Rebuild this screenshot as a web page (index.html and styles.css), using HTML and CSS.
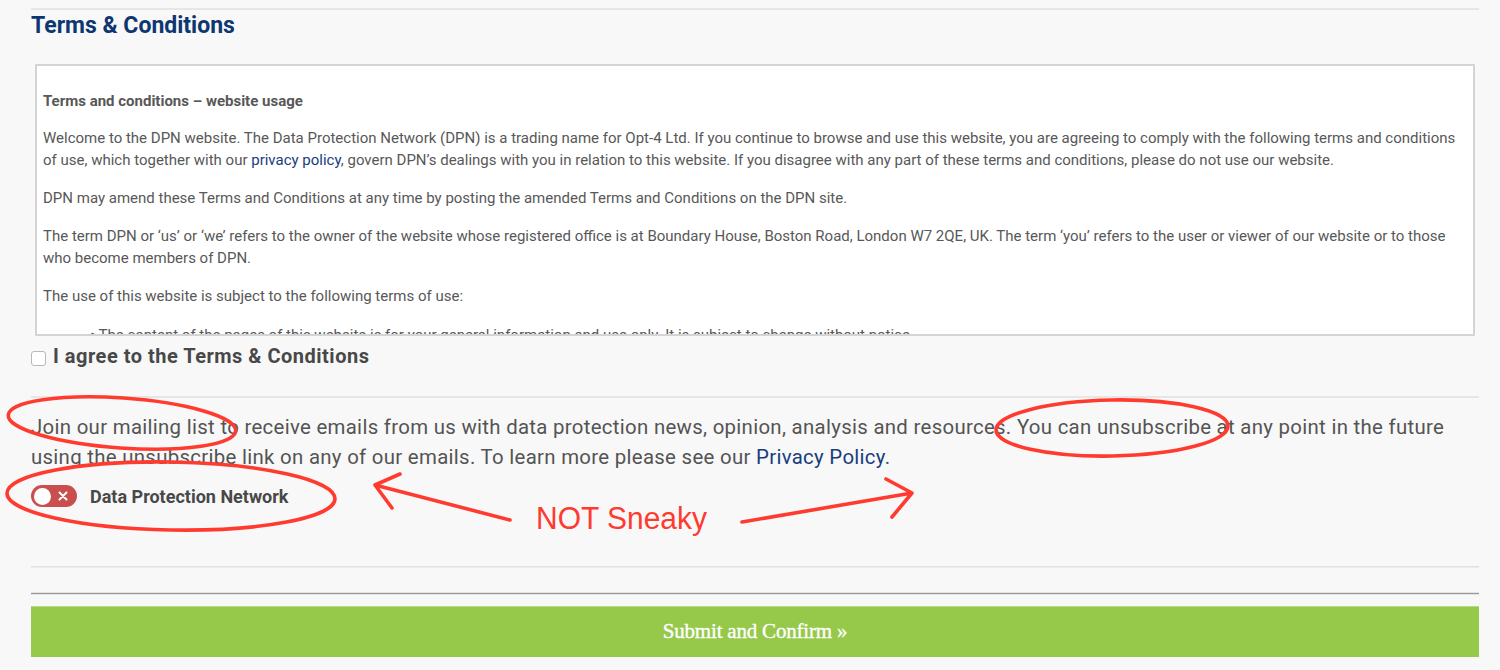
FILE: index.html
```html
<!DOCTYPE html>
<html lang="en">
<head>
<meta charset="utf-8">
<title>Terms &amp; Conditions</title>
<link rel="stylesheet" href="styles.css">
</head>
<body>
<div class="page">
  <hr class="rule rule-top">
  <h2 class="title">Terms &amp; Conditions</h2>

  <div class="terms-box">
    <p class="terms-heading">Terms and conditions – website usage</p>
    <p>Welcome to the DPN website. The Data Protection Network (DPN) is a trading name for Opt-4 Ltd. If you continue to browse and use this website, you are agreeing to comply with the following terms and conditions of use, which together with our <a href="#" class="link">privacy policy</a>, govern DPN’s dealings with you in relation to this website. If you disagree with any part of these terms and conditions, please do not use our website.</p>
    <p>DPN may amend these Terms and Conditions at any time by posting the amended Terms and Conditions on the DPN site.</p>
    <p>The term DPN or ‘us’ or ‘we’ refers to the owner of the website whose registered office is at Boundary House, Boston Road, London W7 2QE, UK. The term ‘you’ refers to the user or viewer of our website or to those who become members of DPN.</p>
    <p>The use of this website is subject to the following terms of use:</p>
    <ul class="terms-list">
      <li>• The content of the pages of this website is for your general information and use only. It is subject to change without notice.</li>
      <li>• From time to time this website may also include links to other websites.</li>
    </ul>
  </div>

  <label class="agree">
    <span class="checkbox"></span>
    <span class="agree-text">I agree to the Terms &amp; Conditions</span>
  </label>

  <hr class="rule rule-mid">

  <p class="mailing">Join our mailing list to receive emails from us with data protection news, opinion, analysis and resources. You can unsubscribe at any point in the future using the unsubscribe link on any of our emails. To learn more please see our <a href="#" class="link">Privacy Policy</a>.</p>

  <div class="toggle-row">
    <span class="toggle">
      <span class="knob"></span>
      <svg class="toggle-x" width="10" height="10" viewBox="0 0 10 10"><path d="M1.5 1.5 L8.5 8.5 M8.5 1.5 L1.5 8.5" stroke="#fff" stroke-width="2" stroke-linecap="round"/></svg>
    </span>
    <span class="toggle-label">Data Protection Network</span>
  </div>

  <hr class="rule rule-low">
  <hr class="rule-dark">

  <button class="submit" type="button">Submit and Confirm »</button>
</div>

<svg class="annotations" width="1500" height="670" viewBox="0 0 1500 670">
  <g fill="none" stroke="#ff3b30" stroke-width="3.6" stroke-linecap="round" stroke-linejoin="round">
    <ellipse cx="122" cy="423" rx="114" ry="25" transform="rotate(4 122 423)"/>
    <ellipse cx="1112" cy="428" rx="116" ry="28" transform="rotate(-1 1112 428)"/>
    <ellipse cx="171" cy="496" rx="164" ry="34" transform="rotate(1 171 496)"/>
    <path d="M510 520 L375 485 M400 474 L375 485 L392 508"/>
    <path d="M742 522 L912 493 M886 479 L912 493 L892 517"/>
  </g>
  <text x="536" y="529" class="sneaky" textLength="171" lengthAdjust="spacingAndGlyphs">NOT Sneaky</text>
</svg>
</body>
</html>
```

FILE: styles.css
```css
html, body {
  margin: 0;
  padding: 0;
}

body {
  background: #f8f8f8;
  font-family: Roboto, "Liberation Sans", sans-serif;
  color: #555555;
  width: 1500px;
  height: 670px;
  overflow: hidden;
  position: relative;
}

.page {
  padding: 0 21px 0 31px;
}

.rule {
  border: 0;
  height: 2px;
  background: #e6e6e6;
  margin: 0;
}

.rule-top {
  margin-top: 8px;
}

.title {
  margin: 2px 0 0 0;
  font-size: 23px;
  line-height: 28px;
  font-weight: 700;
  color: #0e3671;
}

.terms-box {
  margin: 24px 4px 0 4px;
  border: 2px solid #d4d4d4;
  background: #ffffff;
  overflow: hidden;
  padding: 24px 4px 0 6px;
  box-sizing: content-box;
  height: 244px;
  font-size: 15px;
  line-height: 22px;
  color: #585858;
}

.terms-box p {
  margin: 0 0 16px 0;
}

.terms-heading {
  font-weight: 700;
  margin-bottom: 15px !important;
}

.link {
  color: #173e7c;
  text-decoration: none;
}

.terms-list {
  list-style: none;
  margin: 17px 0 0 0;
  padding: 0 0 0 47px;
}

.agree {
  display: flex;
  align-items: center;
  margin-top: 7px;
  height: 26px;
}

.checkbox {
  width: 13px;
  height: 13px;
  border: 1px solid #b8b8b8;
  border-radius: 3px;
  background: #fff;
  margin-top: 5px;
  margin-right: 7px;
  flex: none;
}

.agree-text {
  font-size: 20px;
  line-height: 26px;
  font-weight: 700;
  letter-spacing: 0.5px;
  color: #484848;
}

.rule-mid {
  margin-top: 27px;
}

.mailing {
  margin: 14px 0 0 0;
  font-size: 20.4px;
  line-height: 30px;
  letter-spacing: 0.3px;
  color: #545454;
}

.toggle-row {
  display: flex;
  align-items: center;
  margin-top: 13px;
  height: 22px;
}

.toggle {
  width: 46px;
  height: 22px;
  border-radius: 11px;
  background: #c94f4e;
  display: flex;
  align-items: center;
  flex: none;
  box-sizing: border-box;
  padding-left: 3px;
}

.knob {
  width: 17px;
  height: 17px;
  border-radius: 50%;
  background: #ffffff;
}

.toggle-x {
  margin-left: 7px;
}

.toggle-label {
  margin-left: 13px;
  font-size: 18px;
  font-weight: 700;
  color: #484848;
}

.rule-low {
  margin-top: 59px;
  height: 1px;
  border-top: 1px solid #e0e0e0;
  background: #ececec;
}

.rule-dark {
  margin: 24px 0 0 0;
  border: 0;
  height: 1px;
  border-top: 1px solid #e4e4e4;
  border-bottom: 1px solid #e4e4e4;
  background: #999999;
}

.submit {
  display: block;
  width: 100%;
  margin-top: 11px;
  height: 51px;
  border: 0;
  border-top: 1px solid #b7dc86;
  background: #96c94a;
  color: #ffffff;
  font-family: "Liberation Serif", serif;
  font-size: 21px;
  letter-spacing: -0.2px;
  -webkit-text-stroke: 0.35px #ffffff;
  padding: 0 0 2px 0;
}

.annotations {
  position: absolute;
  top: 0;
  left: 0;
  pointer-events: none;
}

.sneaky {
  font-family: "Liberation Sans", Arial, sans-serif;
  font-size: 31px;
  fill: #ff3b30;
}
```
